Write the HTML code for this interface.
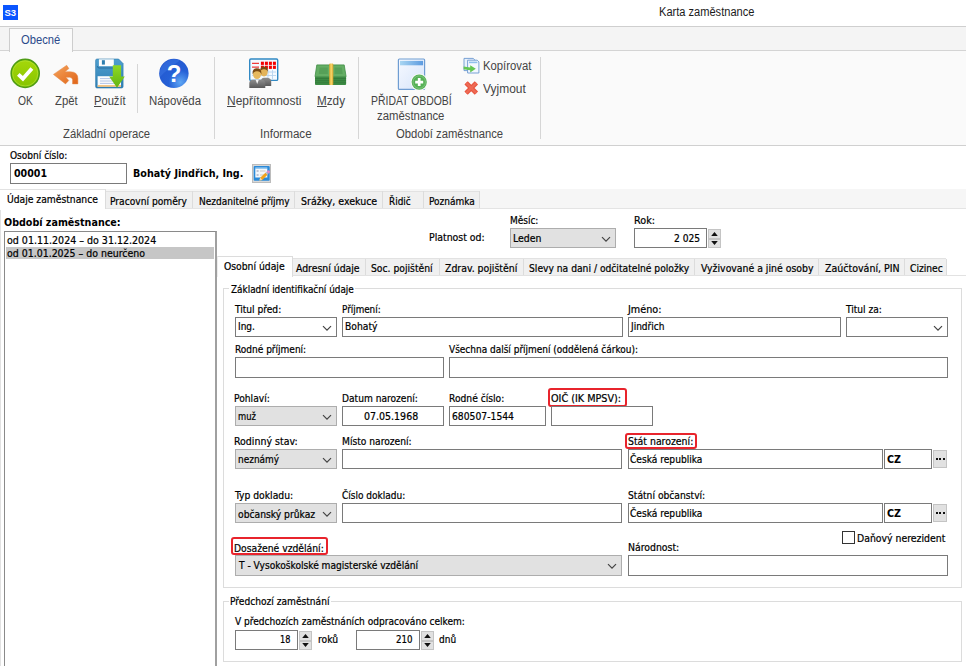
<!DOCTYPE html>
<html lang="cs"><head><meta charset="utf-8"><title>Karta zaměstnance</title>
<style>
html,body{margin:0;padding:0}
body{width:966px;height:666px;position:relative;overflow:hidden;background:#fff}
#root div,#root svg,#root span{position:absolute;box-sizing:content-box}
#root span{white-space:pre;transform-origin:0 0}
#root span.t{font:11px/14px 'DejaVu Sans Condensed','Liberation Sans',sans-serif}
#root span.tb{font:bold 11px/14px 'DejaVu Sans Condensed','Liberation Sans',sans-serif}
#root span.r{font:12px/16px 'Liberation Sans',sans-serif}
#root span.t{-webkit-text-stroke:0.22px currentColor}
</style></head><body><div id="root">
<!-- title bar -->
<div style="left:0;top:0;width:966px;height:26px;background:#fff"></div>
<div style="left:3px;top:5px;width:15px;height:15px;background:#0a55ff"></div>
<span style="left:4.5px;top:7px;font:bold 9.5px/12px 'Liberation Sans',sans-serif;color:#fff;letter-spacing:-0.2px">S3</span>
<!-- ribbon -->
<div style="left:0;top:26px;width:966px;height:1px;background:#cfcfcf"></div>
<div style="left:0;top:27px;width:966px;height:23px;background:#f4f4f4"></div>
<div style="left:0;top:50px;width:966px;height:1px;background:#d4d4d4"></div>
<div style="left:0;top:51px;width:966px;height:94px;background:#fafafa"></div>
<div style="left:0;top:145px;width:966px;height:1px;background:#d0d0d0"></div>
<div style="left:9px;top:28px;width:62px;height:23px;background:#fafafa;border:1px solid #cdcdcd;border-bottom:none"></div>
<div style="left:137px;top:64px;width:1px;height:49px;background:#d6d6d6"></div>
<div style="left:214px;top:57px;width:1px;height:82px;background:#d6d6d6"></div>
<div style="left:358px;top:57px;width:1px;height:82px;background:#d6d6d6"></div>
<div style="left:540px;top:57px;width:1px;height:82px;background:#d6d6d6"></div>
<svg style="left:0;top:52px" width="560" height="44" viewBox="0 52 560 44">
<defs>
<linearGradient id="gOk" x1="0" y1="0" x2="0" y2="1"><stop offset="0" stop-color="#a6d80a"/><stop offset="1" stop-color="#86c400"/></linearGradient>
<linearGradient id="gAr" x1="0" y1="0" x2="1" y2="1"><stop offset="0" stop-color="#f5a45c"/><stop offset="1" stop-color="#e06418"/></linearGradient>
<linearGradient id="gFl" x1="0" y1="0" x2="0" y2="1"><stop offset="0" stop-color="#4f9fcf"/><stop offset="1" stop-color="#2f7fb4"/></linearGradient>
<linearGradient id="gGr" x1="0" y1="0" x2="0" y2="1"><stop offset="0" stop-color="#8fd926"/><stop offset="1" stop-color="#62b412"/></linearGradient>
<radialGradient id="gHp" cx="0.72" cy="0.8" r="0.9"><stop offset="0" stop-color="#5ea6f4"/><stop offset="0.45" stop-color="#2560d6"/><stop offset="1" stop-color="#2458cf"/></radialGradient>
<linearGradient id="gDoc" x1="0" y1="0" x2="1" y2="1"><stop offset="0" stop-color="#f6f9ff"/><stop offset="1" stop-color="#d6e4fa"/></linearGradient>
<linearGradient id="gHdr" x1="0" y1="0" x2="1" y2="0"><stop offset="0" stop-color="#a9d6f2"/><stop offset="1" stop-color="#5c9be0"/></linearGradient>
<linearGradient id="gGold" x1="0" y1="0" x2="1" y2="0"><stop offset="0" stop-color="#d9a12a"/><stop offset="0.5" stop-color="#f7d86a"/><stop offset="1" stop-color="#d9a12a"/></linearGradient>
<linearGradient id="gSuit" x1="0" y1="0" x2="0" y2="1"><stop offset="0" stop-color="#8d8d8d"/><stop offset="1" stop-color="#5a5a5a"/></linearGradient>
</defs>
<!-- OK -->
<circle cx="25.2" cy="73.4" r="14" fill="url(#gOk)" stroke="#4f9c16" stroke-width="1.6"/>
<circle cx="25.2" cy="73.4" r="12.6" fill="none" stroke="#b4e23a" stroke-width="0.8" opacity="0.8"/>
<path d="M18.3 74.4 L22.9 78.7 L31.9 68.6" fill="none" stroke="#fff" stroke-width="3.8"/>
<!-- Zpet -->
<path d="M53.4 74.4 L66.7 65.3 L68.9 68.6 L64.9 71.8 L70.4 71.7 Q77.9 72 77.9 78.5 L77.9 83.9 L72.5 83.9 L72.5 79.6 Q72.3 77.4 69.6 77.3 L65.9 77.3 L68.8 80.5 L65.5 83.9 Z" fill="url(#gAr)" stroke="#e58a4c" stroke-width="0.5"/>
<!-- Pouzit -->
<path d="M97 59 L118.6 59 L123.1 63.6 L123.1 86.5 Q123.1 88 121.6 88 L97 88 Q95.6 88 95.6 86.5 L95.6 60.5 Q95.6 59 97 59 Z" fill="url(#gFl)" stroke="#2b78ab" stroke-width="0.6"/>
<path d="M98.9 59.3 L113.8 59.3 L113.8 66.2 L98.9 66.2 Z" fill="#fdfdfd"/>
<rect x="101.9" y="60.2" width="3" height="4.4" fill="#2f7fb0"/>
<path d="M97.4 66.2 Q97.4 68 99.2 68 L113.8 68" fill="none" stroke="#2a6f9f" stroke-width="1"/>
<rect x="97.6" y="76.2" width="23.4" height="10.5" fill="#fcfcfd"/>
<rect x="97.6" y="85.2" width="23.4" height="1.5" fill="#f1b868"/>
<path d="M100 78.6 H118 M100 81 H118 M100 83.4 H118" stroke="#9fb7df" stroke-width="0.8"/>
<path d="M112.8 65.2 L121.1 65.2 L121.1 76.6 L124.8 76.6 L117 87.8 L109.2 76.6 L112.8 76.6 Z" fill="url(#gGr)"/>
<!-- Napoveda -->
<circle cx="173.9" cy="73.4" r="14.7" fill="url(#gHp)"/>
<path d="M160 77 Q166 70 180 60.5 A14.7 14.7 0 0 0 160 77 Z" fill="#3b74e2" opacity="0.55"/>
<text x="174.1" y="82.4" text-anchor="middle" font-family="'Liberation Sans',sans-serif" font-weight="bold" font-size="24" fill="#fff">?</text>
<!-- Nepritomnosti: calendar -->
<rect x="249.7" y="59" width="28" height="21.4" rx="1.2" fill="#f4faff" stroke="#3189c4" stroke-width="1.4"/>
<path d="M252 63.3 H259 M252 67.2 H259" stroke="#ee3a3a" stroke-width="1.3"/>
<g fill="#f40000"><rect x="260.9" y="61.7" width="3" height="3.2"/><rect x="264.9" y="61.7" width="3" height="3.2"/><rect x="268.9" y="61.7" width="3" height="3.2"/><rect x="272.9" y="61.7" width="3" height="3.2"/>
<rect x="260.9" y="65.7" width="3" height="3.2"/><rect x="264.9" y="65.7" width="3" height="3.2"/><rect x="268.9" y="65.7" width="3" height="3.2"/><rect x="272.9" y="65.7" width="3" height="3.2"/></g>
<path d="M252 72 H276 M252 75.5 H276 M268 70 V79 M272.5 70 V79" stroke="#b7d4ee" stroke-width="0.9"/>
<!-- people back -->
<path d="M261 86 L261 81 Q261 78.2 264 77.8 L267.5 77.8 Q271.2 78.4 271.2 81.5 L271.2 86 Z" fill="url(#gSuit)"/>
<ellipse cx="264" cy="72" rx="3.6" ry="4.4" fill="#e3b45a"/>
<path d="M260.2 72 Q259.8 66.4 264 66.6 Q268.4 66.6 267.8 72 Q267 69 264 69.2 Q261 69 260.2 72 Z" fill="#7a4a12"/>
<!-- people front -->
<path d="M249.3 87.9 L249.3 83 Q249.3 80 253 79.7 L261.5 79.7 Q265.3 80 265.3 83 L265.3 87.9 Z" fill="url(#gSuit)"/>
<path d="M255.6 79.7 L257.2 84 L258.8 79.7 Z" fill="#f4f4f4"/>
<ellipse cx="257" cy="74.2" rx="4" ry="4.9" fill="#e6b95e"/>
<path d="M252.7 74.5 Q252 68 257 68.2 Q262 68.2 261.3 74.5 Q260.4 71 257 71.2 Q253.6 71 252.7 74.5 Z" fill="#7a4a12"/>
<!-- Mzdy -->
<path d="M315 76.4 L346.1 76.4 L346.1 84 Q346.1 84.9 345.2 84.9 L315.9 84.9 Q315 84.9 315 84 Z" fill="#3d8c45"/>
<path d="M315 78.6 H346.1 M315 80.7 H346.1 M315 82.8 H346.1" stroke="#2f7337" stroke-width="0.7"/>
<path d="M316.8 64.9 L344.2 64.9 L346.1 76.6 L315 76.6 Z" fill="#64ae64" stroke="#3f8d45" stroke-width="0.8"/>
<path d="M319.6 67.6 L327.8 67.6 L327.8 74 L318.8 74 Z M334.6 67.6 L341.8 67.6 L342.7 74 L334.6 74 Z" fill="#56a058"/>
<rect x="329.2" y="63.6" width="4.1" height="21.3" rx="1" fill="url(#gGold)"/>
<!-- Pridat obdobi -->
<rect x="398.4" y="59" width="26.2" height="30.4" rx="1" fill="url(#gDoc)" stroke="#6f9dd2" stroke-width="1.2"/>
<rect x="400" y="60.9" width="23.1" height="4.4" fill="url(#gHdr)"/>
<circle cx="419.2" cy="82.1" r="8.6" fill="#fafafa"/>
<circle cx="419.2" cy="82.1" r="7.6" fill="#55b055"/>
<circle cx="419.2" cy="82.1" r="6.2" fill="none" stroke="#7cc67c" stroke-width="1"/>
<path d="M415.2 82.1 H423.2 M419.2 78.1 V86.1" stroke="#fff" stroke-width="2.7"/>
<!-- Kopirovat -->
<path d="M464 58.4 L473.2 58.4 L474.9 60 L474.9 70.6 L464 70.6 Z" fill="#eaf2fc" stroke="#6b98d0" stroke-width="0.9"/>
<path d="M467.6 60.2 L477.2 60.2 L478.9 61.9 L478.9 73 L467.6 73 Z" fill="#f3f8ff" stroke="#6b98d0" stroke-width="0.9"/>
<rect x="469" y="61.6" width="8.4" height="1.6" fill="#8fc0ee"/>
<path d="M463.6 66.6 L470.2 67.6 L470.2 65.2 L475.8 68.8 L470.2 72.4 L470.2 70.3 L463.6 69.2 Z" fill="#63c653"/>
<!-- Vyjmout -->
<path d="M466.1 82.9 L476.4 93.1 M476.4 82.9 L466.1 93.1" stroke="#e8553f" stroke-width="4.7"/>
<path d="M466.1 82.9 L476.4 93.1 M476.4 82.9 L466.1 93.1" stroke="#ee6a55" stroke-width="2.2"/>
</svg>
<!-- edit button -->
<div style="left:252px;top:164px;width:17px;height:17px;background:#d9d9d9;border:1px solid #bcbcbc"></div>
<svg style="left:252px;top:164px" width="19" height="19" viewBox="252 164 19 19">
<rect x="253.7" y="166" width="16" height="14.8" rx="1" fill="#2b8ad9"/>
<rect x="255.3" y="168.5" width="12" height="9" fill="#f4f8fc"/>
<rect x="255.3" y="167.4" width="12" height="1.2" fill="#9fd0f2"/>
<path d="M256.6 171 H258.6 M256.6 175 H258.6" stroke="#8a8aa8" stroke-width="1.2"/>
<path d="M260 171 H265.5 M260 175 H264" stroke="#c8c8c8" stroke-width="1.2"/>
<path d="M259.4 180.6 L260.2 177.8 L265.4 172.7 L267.5 174.8 L262.3 179.9 Z" fill="#f2a21c"/>
<path d="M265.4 172.7 L266.3 171.8 L268.4 173.9 L267.5 174.8 Z" fill="#b8b8c0"/><path d="M266.5 171.6 L267.6 170.5 Q268.5 169.8 269.3 170.7 L269.6 171 Q270.3 171.9 269.6 172.7 L268.6 173.7 Z" fill="#e58acb"/>
<path d="M259.4 180.6 L260.2 177.6 L262.4 179.9 Z" fill="#f0d9b0"/>
</svg>

<!-- outer tab strip -->
<div style="left:0;top:189px;width:966px;height:19px;background:#f6f6f6"></div>
<div style="left:0;top:208px;width:966px;height:1px;background:#e4e4e4"></div>
<div style="left:106px;top:191px;width:374px;height:16px;background:#f0f0f0;border-top:1px solid #e2e2e2"></div>
<div style="left:192px;top:191px;width:1px;height:17px;background:#dcdcdc"></div>
<div style="left:294px;top:191px;width:1px;height:17px;background:#dcdcdc"></div>
<div style="left:382px;top:191px;width:1px;height:17px;background:#dcdcdc"></div>
<div style="left:423px;top:191px;width:1px;height:17px;background:#dcdcdc"></div>
<div style="left:479px;top:191px;width:1px;height:17px;background:#dcdcdc"></div>
<div style="left:0;top:189px;width:105px;height:19px;background:#fff;border-top:1px solid #e2e2e2;border-right:1px solid #dcdcdc"></div>
<div style="left:0;top:210px;width:1px;height:456px;background:#e2e2e2"></div>
<!-- list box -->
<div style="left:4px;top:231px;width:210px;height:440px;background:#fff;border:1px solid #8a8a8a;border-right:2px solid #a0a0a0"></div>
<div style="left:6px;top:247px;width:208px;height:12px;background:#c6c6c6"></div>
<!-- inner tab strip -->
<div style="left:219px;top:275px;width:747px;height:1px;background:#e2e2e2"></div>
<div style="left:292px;top:258px;width:654px;height:16px;background:#f0f0f0;border-top:1px solid #e2e2e2"></div>
<div style="left:365px;top:259px;width:1px;height:16px;background:#dcdcdc"></div>
<div style="left:439px;top:259px;width:1px;height:16px;background:#dcdcdc"></div>
<div style="left:523px;top:259px;width:1px;height:16px;background:#dcdcdc"></div>
<div style="left:694px;top:259px;width:1px;height:16px;background:#dcdcdc"></div>
<div style="left:818px;top:259px;width:1px;height:16px;background:#dcdcdc"></div>
<div style="left:904px;top:259px;width:1px;height:16px;background:#dcdcdc"></div>
<div style="left:946px;top:259px;width:1px;height:16px;background:#dcdcdc"></div>
<div style="left:217px;top:256px;width:74px;height:20px;background:#fff;border:1px solid #dcdcdc;border-bottom:none;border-left-color:#ededed"></div>
<!-- group boxes -->
<div style="left:223px;top:288px;width:737px;height:298px;border:1px solid #dcdcdc"></div>
<div style="left:229px;top:286px;width:126px;height:5px;background:#fff"></div>
<div style="left:223px;top:601px;width:737px;height:59px;border:1px solid #dcdcdc"></div>
<div style="left:229px;top:599px;width:102px;height:5px;background:#fff"></div>
<!-- red highlights -->
<div style="left:548px;top:388px;width:75px;height:15px;border:2px solid #e8242c;border-radius:3px"></div>
<div style="left:625px;top:433px;width:68px;height:12px;border:2px solid #e8242c;border-radius:3px"></div>
<div style="left:231px;top:537px;width:93px;height:14px;border:2px solid #e8242c;border-radius:3px"></div>

<div style="left:10px;top:163px;width:115px;height:19px;background:#fff;border:1px solid #7a7a7a;"></div>
<div style="left:510px;top:228px;width:104px;height:18px;background:#e1e1e1;border:1px solid #adadad;"></div>
<svg style="left:601px;top:235.5px" width="10" height="7" viewBox="0 0 10 7"><path d="M1 1.2 L5 5.2 L9 1.2" fill="none" stroke="#444" stroke-width="1.2"/></svg>
<div style="left:634px;top:228px;width:71px;height:18px;background:#fff;border:1px solid #7a7a7a;"></div>
<div style="left:708px;top:229px;width:11px;height:8px;background:#e1e1e1;border:1px solid #c4c4c4;"></div>
<div style="left:708px;top:239px;width:11px;height:7px;background:#e1e1e1;border:1px solid #c4c4c4;"></div>
<svg style="left:708px;top:229px" width="13" height="19" viewBox="0 0 13 19"><path d="M3.2 7 L6.5 3 L9.8 7 Z M3.2 12 L6.5 16 L9.8 12 Z" fill="#111"/></svg>
<div style="left:235px;top:317px;width:100px;height:18px;background:#fff;border:1px solid #7a7a7a;"></div>
<svg style="left:322px;top:324.5px" width="10" height="7" viewBox="0 0 10 7"><path d="M1 1.2 L5 5.2 L9 1.2" fill="none" stroke="#444" stroke-width="1.2"/></svg>
<div style="left:342px;top:317px;width:279px;height:18px;background:#fff;border:1px solid #7a7a7a;"></div>
<div style="left:628px;top:317px;width:211px;height:18px;background:#fff;border:1px solid #7a7a7a;"></div>
<div style="left:846px;top:317px;width:100px;height:18px;background:#fff;border:1px solid #7a7a7a;"></div>
<svg style="left:933px;top:324.5px" width="10" height="7" viewBox="0 0 10 7"><path d="M1 1.2 L5 5.2 L9 1.2" fill="none" stroke="#444" stroke-width="1.2"/></svg>
<div style="left:235px;top:357px;width:207px;height:19px;background:#fff;border:1px solid #7a7a7a;"></div>
<div style="left:449px;top:357px;width:497px;height:19px;background:#fff;border:1px solid #7a7a7a;"></div>
<div style="left:235px;top:406px;width:100px;height:18px;background:#e1e1e1;border:1px solid #adadad;"></div>
<svg style="left:322px;top:413.5px" width="10" height="7" viewBox="0 0 10 7"><path d="M1 1.2 L5 5.2 L9 1.2" fill="none" stroke="#444" stroke-width="1.2"/></svg>
<div style="left:342px;top:406px;width:100px;height:18px;background:#fff;border:1px solid #7a7a7a;"></div>
<div style="left:449px;top:406px;width:95px;height:18px;background:#fff;border:1px solid #7a7a7a;"></div>
<div style="left:551px;top:406px;width:100px;height:18px;background:#fff;border:1px solid #7a7a7a;"></div>
<div style="left:235px;top:449px;width:100px;height:18px;background:#e1e1e1;border:1px solid #adadad;"></div>
<svg style="left:322px;top:456.5px" width="10" height="7" viewBox="0 0 10 7"><path d="M1 1.2 L5 5.2 L9 1.2" fill="none" stroke="#444" stroke-width="1.2"/></svg>
<div style="left:342px;top:449px;width:278px;height:18px;background:#fff;border:1px solid #7a7a7a;"></div>
<div style="left:628px;top:449px;width:253px;height:18px;background:#fff;border:1px solid #7a7a7a;"></div>
<div style="left:884px;top:449px;width:46px;height:18px;background:#fff;border:1px solid #7a7a7a;"></div>
<div style="left:235px;top:503px;width:100px;height:18px;background:#e1e1e1;border:1px solid #adadad;"></div>
<svg style="left:322px;top:510.5px" width="10" height="7" viewBox="0 0 10 7"><path d="M1 1.2 L5 5.2 L9 1.2" fill="none" stroke="#444" stroke-width="1.2"/></svg>
<div style="left:342px;top:503px;width:278px;height:18px;background:#fff;border:1px solid #7a7a7a;"></div>
<div style="left:628px;top:503px;width:253px;height:18px;background:#fff;border:1px solid #7a7a7a;"></div>
<div style="left:884px;top:503px;width:46px;height:18px;background:#fff;border:1px solid #7a7a7a;"></div>
<div style="left:933px;top:450px;width:12px;height:16px;background:#e1e1e1;border:1px solid #c4c4c4;"></div>
<div style="left:935.5px;top:458px;width:2px;height:2px;background:#111;"></div>
<div style="left:939.0px;top:458px;width:2px;height:2px;background:#111;"></div>
<div style="left:942.5px;top:458px;width:2px;height:2px;background:#111;"></div>
<div style="left:933px;top:504px;width:12px;height:16px;background:#e1e1e1;border:1px solid #c4c4c4;"></div>
<div style="left:935.5px;top:512px;width:2px;height:2px;background:#111;"></div>
<div style="left:939.0px;top:512px;width:2px;height:2px;background:#111;"></div>
<div style="left:942.5px;top:512px;width:2px;height:2px;background:#111;"></div>
<div style="left:235px;top:555px;width:385px;height:19px;background:#e1e1e1;border:1px solid #adadad;"></div>
<svg style="left:607px;top:562.5px" width="10" height="7" viewBox="0 0 10 7"><path d="M1 1.2 L5 5.2 L9 1.2" fill="none" stroke="#444" stroke-width="1.2"/></svg>
<div style="left:628px;top:555px;width:318px;height:19px;background:#fff;border:1px solid #7a7a7a;"></div>
<div style="left:842px;top:531px;width:11px;height:11px;background:#fff;border:1px solid #333;"></div>
<div style="left:235px;top:630px;width:61px;height:18px;background:#fff;border:1px solid #7a7a7a;"></div>
<div style="left:299px;top:631px;width:11px;height:8px;background:#e1e1e1;border:1px solid #c4c4c4;"></div>
<div style="left:299px;top:641px;width:11px;height:7px;background:#e1e1e1;border:1px solid #c4c4c4;"></div>
<svg style="left:299px;top:631px" width="13" height="19" viewBox="0 0 13 19"><path d="M3.2 7 L6.5 3 L9.8 7 Z M3.2 12 L6.5 16 L9.8 12 Z" fill="#111"/></svg>
<div style="left:356px;top:630px;width:62px;height:18px;background:#fff;border:1px solid #7a7a7a;"></div>
<div style="left:421px;top:631px;width:11px;height:8px;background:#e1e1e1;border:1px solid #c4c4c4;"></div>
<div style="left:421px;top:641px;width:11px;height:7px;background:#e1e1e1;border:1px solid #c4c4c4;"></div>
<svg style="left:421px;top:631px" width="13" height="19" viewBox="0 0 13 19"><path d="M3.2 7 L6.5 3 L9.8 7 Z M3.2 12 L6.5 16 L9.8 12 Z" fill="#111"/></svg>
<span class="r" style="left:659.0px;top:4px;color:#1b1b1b;transform:scaleX(0.9227);">Karta zaměstnance</span>
<span class="r" style="left:20.9px;top:32px;color:#2b4a8b;transform:scaleX(0.9350);">Obecné</span>
<span class="r" style="left:17.9px;top:93px;color:#444;transform:scaleX(0.8591);">OK</span>
<span class="r" style="left:54.6px;top:93px;color:#444;transform:scaleX(0.9411);">Zpět</span>
<span class="r" style="left:93.9px;top:93px;color:#444;transform:scaleX(0.9286);"><u>P</u>oužít</span>
<span class="r" style="left:149.0px;top:93px;color:#444;transform:scaleX(0.9503);">Nápověda</span>
<span class="r" style="left:227.0px;top:93px;color:#444;transform:scaleX(0.9959);"><u>N</u>epřítomnosti</span>
<span class="r" style="left:316.8px;top:93px;color:#444;transform:scaleX(0.9760);"><u>M</u>zdy</span>
<span class="r" style="left:371.0px;top:93px;color:#444;transform:scaleX(0.8686);">PŘIDAT OBDOBÍ</span>
<span class="r" style="left:377.4px;top:108px;color:#444;transform:scaleX(0.9443);">zaměstnance</span>
<span class="r" style="left:482.6px;top:58px;color:#444;transform:scaleX(0.9401);">Kopírovat</span>
<span class="r" style="left:482.6px;top:81px;color:#444;transform:scaleX(0.9975);">Vyjmout</span>
<span class="r" style="left:62.9px;top:126px;color:#444;transform:scaleX(0.9392);">Základní operace</span>
<span class="r" style="left:260.4px;top:126px;color:#444;transform:scaleX(0.9670);">Informace</span>
<span class="r" style="left:395.9px;top:126px;color:#444;transform:scaleX(0.9388);">Období zaměstnance</span>
<span class="t" style="left:10.3px;top:149px;color:#000;transform:scaleX(0.9120);">Osobní číslo:</span>
<span class="tb" style="left:14.0px;top:167px;color:#000;transform:scaleX(0.9612);">00001</span>
<span class="tb" style="left:132.6px;top:167px;color:#000;transform:scaleX(0.9696);">Bohatý Jindřich, Ing.</span>
<span class="t" style="left:7.0px;top:193px;color:#000;transform:scaleX(0.9299);">Údaje zaměstnance</span>
<span class="t" style="left:109.6px;top:195px;color:#000;transform:scaleX(0.9230);">Pracovní poměry</span>
<span class="t" style="left:198.5px;top:195px;color:#000;transform:scaleX(0.9103);">Nezdanitelné příjmy</span>
<span class="t" style="left:300.9px;top:195px;color:#000;transform:scaleX(0.9549);">Srážky, exekuce</span>
<span class="t" style="left:388.8px;top:195px;color:#000;transform:scaleX(0.9001);">Řidič</span>
<span class="t" style="left:429.3px;top:195px;color:#000;transform:scaleX(0.9086);">Poznámka</span>
<span class="tb" style="left:4.1px;top:216px;color:#000;transform:scaleX(0.9668);">Období zaměstnance:</span>
<span class="t" style="left:7.1px;top:234px;color:#000;transform:scaleX(0.9596);">od 01.11.2024 – do 31.12.2024</span>
<span class="t" style="left:7.1px;top:247px;color:#000;transform:scaleX(0.9507);">od 01.01.2025 – do neurčeno</span>
<span class="t" style="left:428.5px;top:231px;color:#000;transform:scaleX(0.9466);">Platnost od:</span>
<span class="t" style="left:509.8px;top:214px;color:#000;transform:scaleX(0.9065);">Měsíc:</span>
<span class="t" style="left:513.1px;top:232px;color:#000;transform:scaleX(0.9447);">Leden</span>
<span class="t" style="left:634.0px;top:214px;color:#000;transform:scaleX(0.9760);">Rok:</span>
<span class="t" style="left:674.3px;top:232px;color:#000;transform:scaleX(0.9249);">2 025</span>
<span class="t" style="left:223.7px;top:260px;color:#000;transform:scaleX(0.9334);">Osobní údaje</span>
<span class="t" style="left:296.1px;top:262px;color:#000;transform:scaleX(0.9414);">Adresní údaje</span>
<span class="t" style="left:371.4px;top:262px;color:#000;transform:scaleX(0.9325);">Soc. pojištění</span>
<span class="t" style="left:445.2px;top:262px;color:#000;transform:scaleX(0.9455);">Zdrav. pojištění</span>
<span class="t" style="left:528.8px;top:262px;color:#000;transform:scaleX(0.9272);">Slevy na dani / odčitatelné položky</span>
<span class="t" style="left:700.5px;top:262px;color:#000;transform:scaleX(0.9428);">Vyživované a jiné osoby</span>
<span class="t" style="left:824.6px;top:262px;color:#000;transform:scaleX(0.9564);">Zaúčtování, PIN</span>
<span class="t" style="left:910.0px;top:262px;color:#000;transform:scaleX(0.9232);">Cizinec</span>
<span class="t" style="left:230.6px;top:283px;color:#000;transform:scaleX(0.8978);">Základní identifikační údaje</span>
<span class="t" style="left:235.1px;top:303px;color:#000;transform:scaleX(0.9180);">Titul před:</span>
<span class="t" style="left:341.6px;top:303px;color:#000;transform:scaleX(0.8886);">Příjmení:</span>
<span class="t" style="left:627.6px;top:303px;color:#000;transform:scaleX(0.9734);">Jméno:</span>
<span class="t" style="left:846.2px;top:303px;color:#000;transform:scaleX(0.9157);">Titul za:</span>
<span class="t" style="left:237.7px;top:320px;color:#000;transform:scaleX(0.9100);">Ing.</span>
<span class="t" style="left:344.6px;top:320px;color:#000;transform:scaleX(0.9306);">Bohatý</span>
<span class="t" style="left:630.5px;top:320px;color:#000;transform:scaleX(0.9100);">Jindřich</span>
<span class="t" style="left:235.0px;top:343px;color:#000;transform:scaleX(0.9100);">Rodné příjmení:</span>
<span class="t" style="left:449.2px;top:343px;color:#000;transform:scaleX(0.9067);">Všechna další příjmení (oddělená čárkou):</span>
<span class="t" style="left:234.4px;top:392px;color:#000;transform:scaleX(0.9261);">Pohlaví:</span>
<span class="t" style="left:341.7px;top:392px;color:#000;transform:scaleX(0.9190);">Datum narození:</span>
<span class="t" style="left:448.7px;top:392px;color:#000;transform:scaleX(0.9260);">Rodné číslo:</span>
<span class="t" style="left:551.1px;top:392px;color:#000;transform:scaleX(0.9745);">OIČ (IK MPSV):</span>
<span class="t" style="left:237.9px;top:410px;color:#000;transform:scaleX(0.8480);">muž</span>
<span class="t" style="left:363.7px;top:410px;color:#000;transform:scaleX(0.9566);">07.05.1968</span>
<span class="t" style="left:451.5px;top:410px;color:#000;transform:scaleX(0.9319);">680507-1544</span>
<span class="t" style="left:234.4px;top:435px;color:#000;transform:scaleX(0.9535);">Rodinný stav:</span>
<span class="t" style="left:341.7px;top:435px;color:#000;transform:scaleX(0.9232);">Místo narození:</span>
<span class="t" style="left:627.7px;top:435px;color:#000;transform:scaleX(0.9449);">Stát narození:</span>
<span class="t" style="left:237.9px;top:453px;color:#000;transform:scaleX(0.9052);">neznámý</span>
<span class="t" style="left:630.2px;top:453px;color:#000;transform:scaleX(0.9192);">Česká republika</span>
<span class="tb" style="left:886.6px;top:453px;color:#000;transform:scaleX(0.9697);">CZ</span>
<span class="t" style="left:235.3px;top:489px;color:#000;transform:scaleX(0.9312);">Typ dokladu:</span>
<span class="t" style="left:341.7px;top:489px;color:#000;transform:scaleX(0.9100);">Číslo dokladu:</span>
<span class="t" style="left:627.7px;top:489px;color:#000;transform:scaleX(0.9261);">Státní občanství:</span>
<span class="t" style="left:238.2px;top:508px;color:#000;transform:scaleX(0.9298);">občanský průkaz</span>
<span class="t" style="left:630.2px;top:507px;color:#000;transform:scaleX(0.9192);">Česká republika</span>
<span class="tb" style="left:886.6px;top:507px;color:#000;transform:scaleX(0.9697);">CZ</span>
<span class="t" style="left:234.4px;top:542px;color:#000;transform:scaleX(0.9325);">Dosažené vzdělání:</span>
<span class="t" style="left:627.7px;top:541px;color:#000;transform:scaleX(0.9424);">Národnost:</span>
<span class="t" style="left:239.0px;top:559px;color:#000;transform:scaleX(0.9195);">T - Vysokoškolské magisterské vzdělání</span>
<span class="t" style="left:857.3px;top:532px;color:#000;transform:scaleX(0.9431);">Daňový nerezident</span>
<span class="t" style="left:230.2px;top:595px;color:#000;transform:scaleX(0.9194);">Předchozí zaměstnání</span>
<span class="t" style="left:234.5px;top:615px;color:#000;transform:scaleX(0.9140);">V předchozích zaměstnáních odpracováno celkem:</span>
<span class="t" style="left:280.4px;top:633px;color:#000;transform:scaleX(0.8258);">18</span>
<span class="t" style="left:317.6px;top:633px;color:#000;transform:scaleX(0.9328);">roků</span>
<span class="t" style="left:395.5px;top:633px;color:#000;transform:scaleX(0.8734);">210</span>
<span class="t" style="left:439.1px;top:633px;color:#000;transform:scaleX(0.9075);">dnů</span>
</div></body></html>
